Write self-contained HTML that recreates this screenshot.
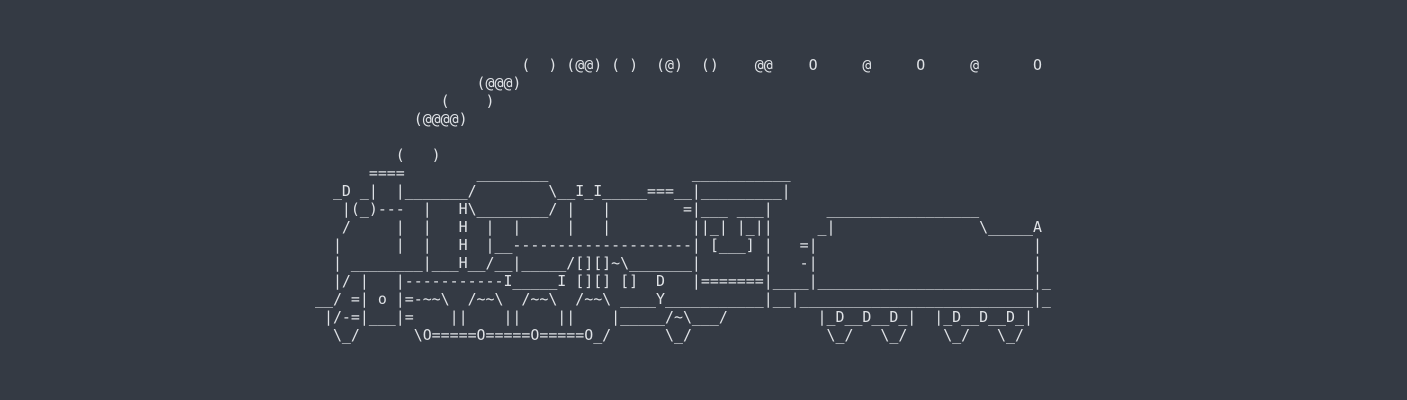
<!DOCTYPE html>
<html><head><meta charset="utf-8"><style>
html,body{margin:0;padding:0;background:#343a44;width:1407px;height:400px;overflow:hidden}
pre{position:absolute;left:315px;top:56px;margin:0;font-family:"DejaVu Sans Mono","Liberation Mono",monospace;font-size:14.92px;line-height:18px;color:#dfe2e6;white-space:pre}
</style></head><body><pre>                       (  ) (@@) ( )  (@)  ()    @@    O     @     O     @      O
                  (@@@)
              (    )
           (@@@@)

         (   )
      ====        ________                ___________
  _D _|  |_______/        \__I_I_____===__|_________|
   |(_)---  |   H\________/ |   |        =|___ ___|      _________________
   /     |  |   H  |  |     |   |         ||_| |_||     _|                \_____A
  |      |  |   H  |__--------------------| [___] |   =|                        |
  | ________|___H__/__|_____/[][]~\_______|       |   -|                        |
  |/ |   |-----------I_____I [][] []  D   |=======|____|________________________|_
__/ =| o |=-~~\  /~~\  /~~\  /~~\ ____Y___________|__|__________________________|_
 |/-=|___|=    ||    ||    ||    |_____/~\___/          |_D__D__D_|  |_D__D__D_|
  \_/      \O=====O=====O=====O_/      \_/               \_/   \_/    \_/   \_/</pre></body></html>
